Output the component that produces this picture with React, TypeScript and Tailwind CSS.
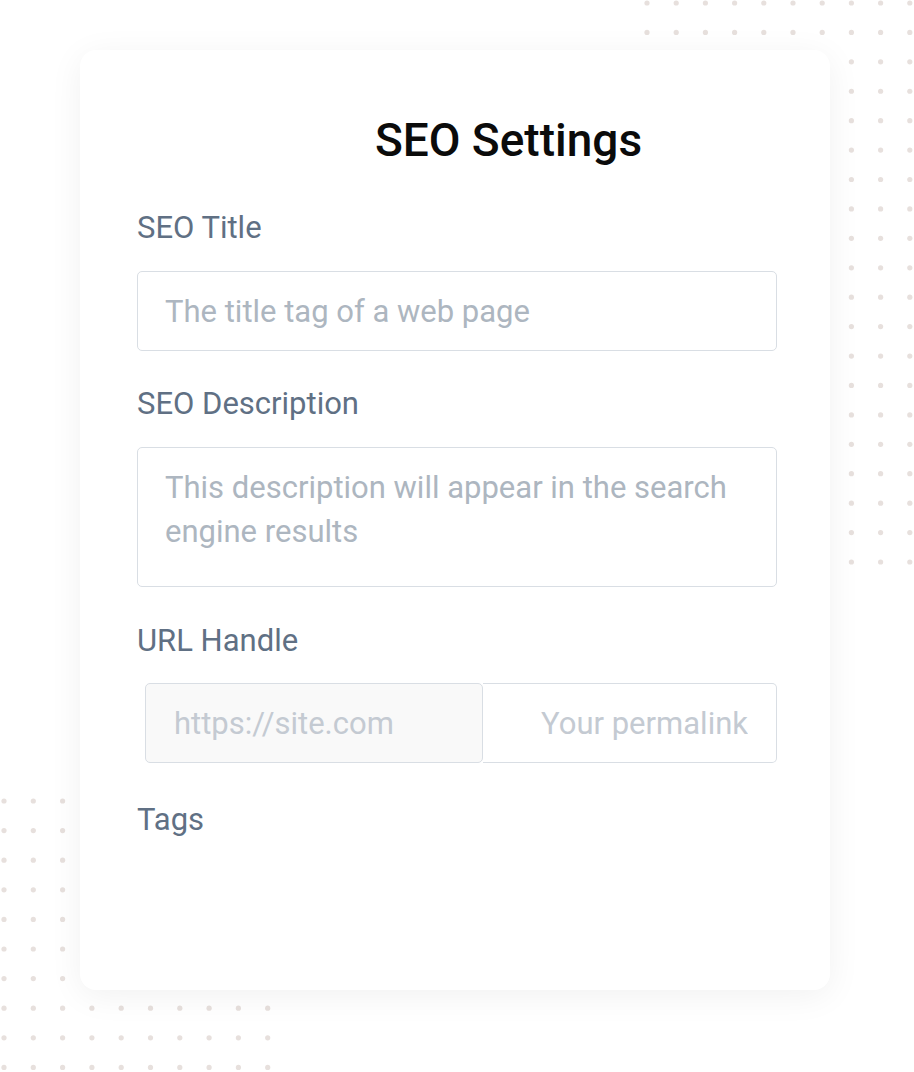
import React from 'react';

// decorative dot grids behind the card
function DotGrid({ cols, rows, gapX, gapY, className }: { cols: number; rows: number; gapX: number; gapY: number; className: string }) {
  const w = (cols - 1) * gapX + 6;
  const h = (rows - 1) * gapY + 6;
  const dots = [];
  for (let r = 0; r < rows; r++) {
    for (let c = 0; c < cols; c++) {
      dots.push(<circle key={`${r}-${c}`} cx={3 + c * gapX} cy={3 + r * gapY} r={2.6} fill="#e7e0dd" />);
    }
  }
  return (
    <svg width={w} height={h} className={className} aria-hidden>
      {dots}
    </svg>
  );
}

const labelCls = 'text-[31px] leading-[31px] text-[#607084]';
const fieldCls =
  'w-full border border-[#d9dee4] rounded-[5px] bg-white text-[31px] text-[#4b5563] placeholder:text-[#adb6c0] outline-none';

export default function App() {
  return (
    <div className="relative w-[914px] h-[1072px] overflow-hidden bg-white font-['Roboto',sans-serif]">
      <DotGrid cols={10} rows={20} gapX={29.2} gapY={29.42} className="absolute left-[644px] top-0" />
      <DotGrid cols={10} rows={10} gapX={29.3} gapY={29.6} className="absolute left-[1px] top-[798px]" />

      <div className="relative z-10 ml-[80px] mt-[50px] w-[750px] h-[940px] rounded-[16px] bg-white shadow-[0_6px_34px_rgba(0,0,0,0.06)] pt-[67px] pl-[57px] pr-[53px]">
        <h1 className="pl-[103px] text-center text-[46px] leading-[46px] font-medium text-[#0b0b0b]">SEO Settings</h1>

        <div className={`${labelCls} mt-[49px]`}>SEO Title</div>
        <input className={`${fieldCls} mt-[28px] h-[80px] px-[27px]`} placeholder="The title tag of a web page" />

        <div className={`${labelCls} mt-[37px]`}>SEO Description</div>
        <textarea
          className={`${fieldCls} mt-[28px] h-[140px] block resize-none pl-[27px] pr-[27px] pt-[18px] leading-[44px]`}
          placeholder="This description will appear in the search engine results"
        />

        <div className={`${labelCls} mt-[38px]`}>URL Handle</div>
        <div className="mt-[27px] flex h-[80px] pl-[8px]">
          <input
            className="w-[338px] h-full border border-[#d9dee4] rounded-[5px] bg-[#f9f9f9] px-[28px] text-[31px] placeholder:text-[#c4cad2] outline-none"
            placeholder="https://site.com"
          />
          <input
            className="flex-1 min-w-0 h-full border border-l-0 border-[#d9dee4] rounded-r-[5px] bg-white pr-[28px] text-right text-[31px] placeholder:text-[#c4cad2] outline-none"
            placeholder="Your permalink"
          />
        </div>

        <div className={`${labelCls} mt-[41px]`}>Tags</div>
      </div>
    </div>
  );
}
